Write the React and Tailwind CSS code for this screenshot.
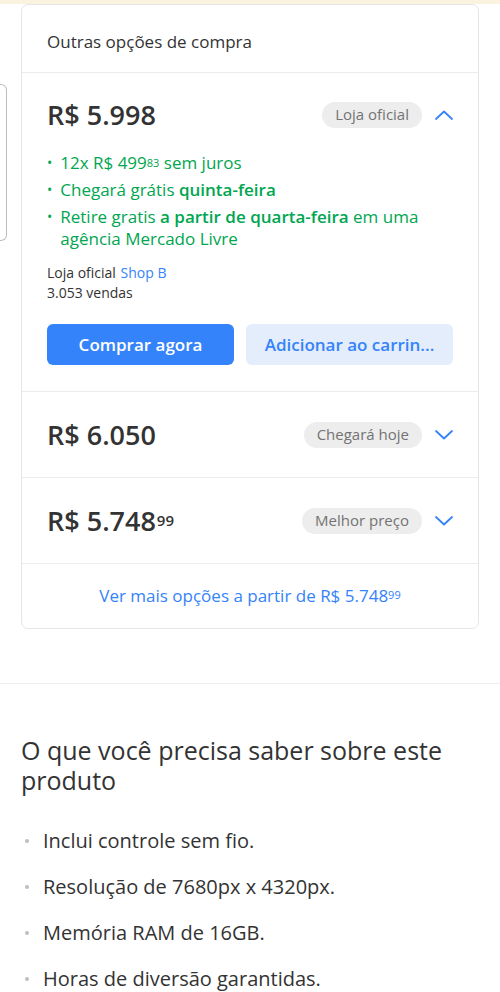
const font = { fontFamily: "'Open Sans', 'Noto Sans', sans-serif" };

const Chevron = ({ up }) => (
  <svg width="18" height="10" viewBox="0 0 18 10" fill="none" className="text-[#3483fa]">
    <path
      d={up ? "M1 9L9 1.5L17 9" : "M1 1L9 8.5L17 1"}
      stroke="currentColor"
      strokeWidth="1.8"
      strokeLinecap="round"
      strokeLinejoin="round"
    />
  </svg>
);

const Badge = ({ children }) => (
  <span className="rounded-full bg-[#ededed] px-[13px] h-[26px] flex items-center text-[15px] text-[#737373] font-medium">
    {children}
  </span>
);

const PriceRow = ({ price, cents, badge, open }) => (
  <div className="flex items-center justify-between">
    <div className="text-[27px] font-semibold text-[#333] leading-none">
      R$ {price}
      {cents && <sup className="text-[15px] ml-[1px] relative -top-[5px]">{cents}</sup>}
    </div>
    <div className="flex items-center gap-[13px]">
      <Badge>{badge}</Badge>
      <Chevron up={open} />
    </div>
  </div>
);

const Bullet = ({ children }) => (
  <li className="flex gap-[8px]">
    <span className="text-[14px]">•</span>
    <p>{children}</p>
  </li>
);

export default function App() {
  return (
    <div className="min-h-[992px] bg-white" style={font}>
      <div className="h-[4px] bg-[#fbf3e0]" />
      <div className="relative">
        <div className="absolute left-0 top-[80px] w-[7px] h-[157px] border border-l-0 border-[#bdbdbd] rounded-r-[6px]" />
        <div className="mx-[21px] border border-[#e6e6e6] rounded-[7px]">
          <div className="px-[25px] pt-[25px] pb-[18px] text-[17px] leading-[24px] text-[#333] border-b border-[#ededed]">
            Outras opções de compra
          </div>

          <div className="px-[25px] pt-[28px] pb-[26px] border-b border-[#ededed]">
            <PriceRow price="5.998" badge="Loja oficial" open />
            <ul className="mt-[24px] text-[17px] text-[#00a650] leading-[22px] space-y-[5px]">
              <Bullet>
                12x R$ 499<sup className="text-[11px] relative -top-[2px]">83</sup> sem juros
              </Bullet>
              <Bullet>
                Chegará grátis <b className="font-semibold">quinta-feira</b>
              </Bullet>
              <Bullet>
                Retire gratis <b className="font-semibold">a partir de quarta-feira</b> em uma agência Mercado Livre
              </Bullet>
            </ul>
            <div className="mt-[13px] text-[14px] text-[#333] leading-[20px]">
              Loja oficial <span className="text-[#3483fa] ml-[1px]">Shop B</span>
              <div>3.053 vendas</div>
            </div>
            <div className="mt-[21px] flex gap-[12px]">
              <button className="flex-1 h-[41px] rounded-[6px] bg-[#3483fa] text-white text-[17px] font-semibold">
                Comprar agora
              </button>
              <button className="flex-1 h-[41px] rounded-[6px] bg-[#e3edfb] text-[#3483fa] text-[17px] font-semibold truncate px-[10px]">
                Adicionar ao carrin...
              </button>
            </div>
          </div>

          <div className="px-[25px] py-[29px] border-b border-[#ededed]">
            <PriceRow price="6.050" badge="Chegará hoje" />
          </div>
          <div className="px-[25px] py-[29px] border-b border-[#ededed]">
            <PriceRow price="5.748" cents="99" badge="Melhor preço" />
          </div>
          <div className="h-[64px] flex items-center justify-center text-[17px] text-[#3483fa]">
            Ver mais opções a partir de R$ 5.748
            <sup className="text-[11px] relative -top-[1px]">99</sup>
          </div>
        </div>
      </div>

      <div className="mt-[54px] border-t border-[#ededed]" />

      <div className="px-[21px] pt-[51px]">
        <h2 className="text-[25px] leading-[30px] text-[#333]">
          O que você precisa saber sobre este produto
        </h2>
        <ul className="mt-[34px] text-[20px] text-[#333] space-y-[22px] leading-[24px]">
          {[
            "Inclui controle sem fio.",
            "Resolução de 7680px x 4320px.",
            "Memória RAM de 16GB.",
            "Horas de diversão garantidas.",
          ].map((t) => (
            <li key={t} className="flex items-center gap-[14px]">
              <span className="w-[4px] h-[4px] rounded-full bg-[#bfbfbf] ml-[4px]" />
              <span>{t}</span>
            </li>
          ))}
        </ul>
      </div>
    </div>
  );
}
